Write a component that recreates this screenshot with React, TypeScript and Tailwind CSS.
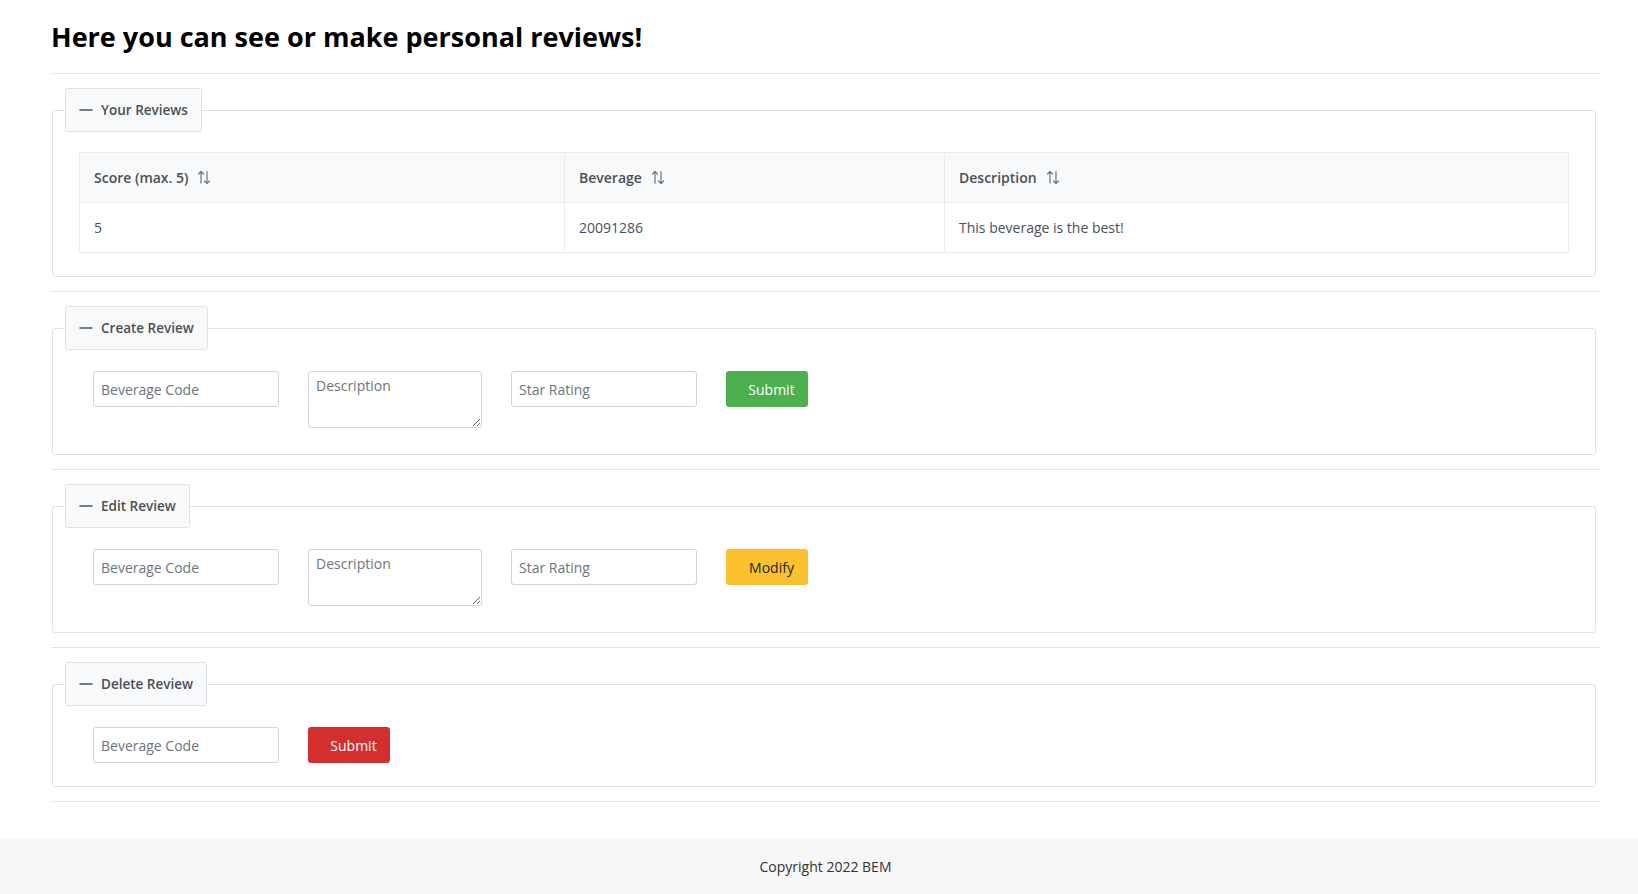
import React from "react";

function MinusIcon() {
  return (
    <svg width="14" height="14" viewBox="0 0 14 14" fill="none">
      <path d="M0.5 7h13" stroke="#495057" strokeWidth="1.5" />
    </svg>
  );
}

function SortIcon() {
  return (
    <svg width="14" height="15" viewBox="0 0 14 15" fill="none" stroke="#6c757d" strokeWidth="1.2" strokeLinecap="round" strokeLinejoin="round">
      <path d="M4 13V1.5M1.5 4L4 1.5L6.5 4" />
      <path d="M10 1.5V13.5M7.5 11L10 13.5L12.5 11" />
    </svg>
  );
}

function Panel({ title, children, className }: { title: string; children: React.ReactNode; className: string }) {
  return (
    <fieldset className={`ml-[1px] mr-[4px] rounded-[3px] border border-[#dee2e6] px-[12px] ${className}`}>
      <legend className="flex h-[44px] items-center gap-[8px] rounded-[3px] border border-[#dee2e6] bg-[#f8f9fa] px-[13px] text-[13.5px] font-semibold text-[#495057]">
        <MinusIcon />
        <span>{title}</span>
      </legend>
      {children}
    </fieldset>
  );
}

function Field({ placeholder }: { placeholder: string }) {
  return (
    <input
      placeholder={placeholder}
      className="h-[36px] w-[186px] rounded-[3px] border border-[#ced4da] bg-white px-[7px] text-[14px] text-[#495057] placeholder:text-[#6c757d] outline-none"
    />
  );
}

function Area() {
  return (
    <textarea
      placeholder="Description"
      className="h-[57px] w-[174px] rounded-[3px] border border-[#ced4da] bg-white px-[7px] pb-[6px] pt-[3px] text-[14px] text-[#495057] placeholder:text-[#6c757d] outline-none"
    />
  );
}

function Btn({ label, color }: { label: string; color: string }) {
  return (
    <button className={`flex h-[36px] w-[82px] items-center justify-center rounded-[3px] pl-[9px] text-[14px] ${color}`}>
      {label}
    </button>
  );
}

export default function App() {
  return (
    <div className="flex h-screen flex-col overflow-hidden bg-white font-['Open_Sans',sans-serif] text-[#495057]">
      <main className="flex-1 pl-[51px] pr-[38px]">
        <div className="flex h-[73px] items-center">
          <h1 className="text-[27px] font-bold leading-tight text-black">Here you can see or make personal reviews!</h1>
        </div>
        <hr className="border-[#e3e3e3]" />

        <div className="py-[14px]">
          <Panel title="Your Reviews" className="pb-[23px]">
            <div className="px-[14px] pt-[20px]">
              <table className="w-full table-fixed border-collapse border border-[#e9ecef] text-[14px]">
                <thead>
                  <tr className="h-[50px] bg-[#f8f9fa]">
                    <th className="w-[485px] border-b border-[#e9ecef] px-[14px] text-left font-semibold">
                      <span className="flex items-center gap-[9px]">Score (max. 5) <SortIcon /></span>
                    </th>
                    <th className="w-[380px] border-b border-l border-[#e9ecef] px-[14px] text-left font-semibold">
                      <span className="flex items-center gap-[9px]">Beverage <SortIcon /></span>
                    </th>
                    <th className="border-b border-l border-[#e9ecef] px-[14px] text-left font-semibold">
                      <span className="flex items-center gap-[9px]">Description <SortIcon /></span>
                    </th>
                  </tr>
                </thead>
                <tbody>
                  <tr className="h-[50px]">
                    <td className="px-[14px]">5</td>
                    <td className="border-l border-[#e9ecef] px-[14px]">20091286</td>
                    <td className="border-l border-[#e9ecef] px-[14px]">This beverage is the best!</td>
                  </tr>
                </tbody>
              </table>
            </div>
          </Panel>
        </div>
        <hr className="border-[#e3e3e3]" />

        <div className="py-[14px]">
          <Panel title="Create Review" className="pb-[26px]">
            <div className="flex items-start gap-[29px] pl-[28px] pt-[21px]">
              <Field placeholder="Beverage Code" />
              <Area />
              <Field placeholder="Star Rating" />
              <Btn label="Submit" color="bg-[#4caf50] text-white" />
            </div>
          </Panel>
        </div>
        <hr className="border-[#e3e3e3]" />

        <div className="py-[14px]">
          <Panel title="Edit Review" className="pb-[26px]">
            <div className="flex items-start gap-[29px] pl-[28px] pt-[21px]">
              <Field placeholder="Beverage Code" />
              <Area />
              <Field placeholder="Star Rating" />
              <Btn label="Modify" color="bg-[#fbc02d] text-[#212529]" />
            </div>
          </Panel>
        </div>
        <hr className="border-[#e3e3e3]" />

        <div className="py-[14px]">
          <Panel title="Delete Review" className="pb-[23px]">
            <div className="flex items-start gap-[29px] pl-[28px] pt-[21px]">
              <Field placeholder="Beverage Code" />
              <Btn label="Submit" color="bg-[#d32f2f] text-white" />
            </div>
          </Panel>
        </div>
        <hr className="border-[#e3e3e3]" />
      </main>

      <footer className="flex h-[56px] shrink-0 items-center justify-center bg-[#f8f7f7] pl-[51px] pr-[38px] text-[14px] text-[#333]">
        Copyright 2022 BEM
      </footer>
    </div>
  );
}
